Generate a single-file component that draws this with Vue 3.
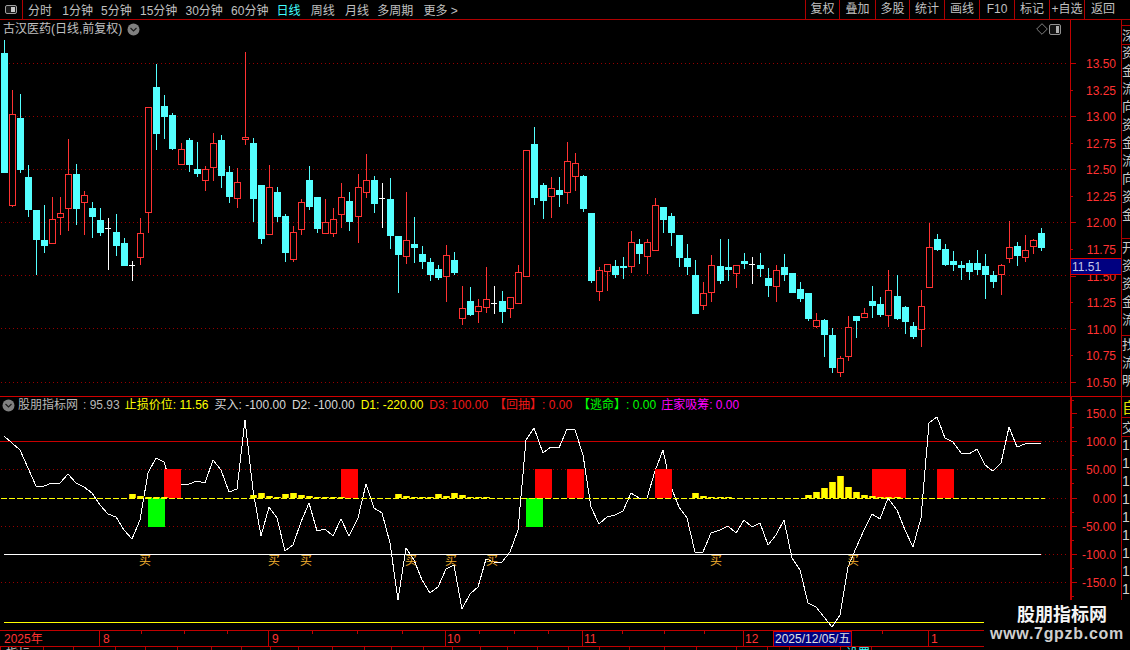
<script setup>
const xOf = (i) => Math.floor(i * 8.0446 + 1.05)

// [kind, high, bodyTop, bodyBottom, low] read from crops; off = y offset ×3 of each crop
const seg1 = `c 0 39 399 399|r 150 222 494 500|c 162 234 390 399|c 375 411 510 531|c 510 510 600 705|c 495 600 618 639|r 471 537 609 612|r 471 519 531 585|r 297 402 504 573|c 372 402 507 555|r 453 465 486 585|c 486 504 531 594|c 504 540 579 588|w 534 564 567 690|c 522 576 618 648|c 594 609 678 678|w 663 675 678 723|r 534 579 651 675|r 201 201 516 579|c 72 141 282 330|c 165 198 231 297|c 219 225 327 330|r 309 327 372 372|c 294 300 375 396|c 306 387 402 411|r 378 387 420 453|r 279 309 381 423|c 285 300 408 444|c 378 396 471 489|r 384 426 474 504|r 36 291 297 315|c 294 309 477 546|c 435 435 597 612|r 375 441 582 582`
const seg2 = `c 201 216 291 306|c 282 288 399 426|r 318 336 417 426|r 237 246 327 345|c 138 180 261 270|c 231 231 327 339|r 237 306 339 339|r 264 297 339 351|r 189 231 282 324|c 216 243 306 333|r 162 201 288 369|r 102 180 216 234|c 168 180 252 279|w 189 234 237 324|c 174 237 348 387|c 348 348 405 519|r 216 360 408 432|c 291 372 384 429|c 378 402 426 447|c 414 426 465 483|c 435 447 474 480|r 375 405 468 546|c 396 420 459 465|r 498 564 594 615|c 501 543 585 588|r 537 558 573 609|r 441 537 561 579|w 498 549 552 582|c 513 543 576 609|r 531 531 564 594|r 435 456 549 549|r 90 90 468 468|c 21 72 234 255|c 189 195 243 297|r 171 204 228 294|c 171 210 225 261|r 66 123 216 252|r 99 129 168 213|c 165 168 267 276|c 279 279 483 489|r 441 450 513 543|r 432 432 453 513|c 420 438 465 474|c 411 438 444 477|r 333 366 438 459|c 357 372 402 432|r 357 366 408 462|r 234 255 390 393|c 261 261 300 339|c 279 288 339 378|c 345 345 414 441|c 372 414 441 465|c 420 465 582 582|r 486 519 555 570|r 405 435 516 546|c 357 438 483 492|c 357 441 450 483|r 435 435 459 504|c 399 423 432 447|w 411 432 435 492|c 399 435 447 471|c 444 474 498 531|r 435 450 498 546`
const seg3 = `c 162 201 225 243|c 219 219 279 279|c 246 267 297 306|c 279 279 357 363|r 339 360 378 384|c 357 360 405 471|c 384 405 504 519|r 468 474 516 531|r 348 381 468 483|c 348 348 363 414|r 324 339 351 351|c 258 303 318 354|c 291 312 345 351|r 210 270 345 381|c 225 288 357 360|c 318 321 366 402|c 366 378 411 417|r 270 318 387 441|r 69 141 261 261|c 102 117 150 153|c 132 147 195 198|c 153 183 195 213|c 183 195 204 240|c 180 189 216 240|c 150 189 210 225|c 162 198 225 297|c 213 225 246 264|r 192 195 222 285|r 63 141 174 189|c 126 138 168 198|r 105 150 171 186|r 117 120 138 162|c 84 99 144 153`

const parse = (txt, off) => txt.split('|').map((r) => {
  const [k, h, t, b, l] = r.split(' ')
  const y = (v) => Math.round((Number(v) + off) / 3)
  return { k, h: y(h), t: y(t), b: y(b), l: y(l) }
})
const colors = { c: '#54ffff', r: '#ff3232', w: '#ffffff' }
const candles = [...parse(seg1, 120), ...parse(seg2, 360), ...parse(seg3, 600)].map((c, i) => {
  const x = xOf(i)
  return { ...c, x, color: colors[c.k], hgt: Math.max(c.b - c.t, 1) }
})

const lineY = [436,443,450,468,486,486,483,483,474,483,487,493,505,514,517,530,539,520,473,458,462,488,485,484,481,483,460,470,492,489,420,490,536,507,518,551,545,522,503,531,529,536,519,536,518,484,508,513,543,600,548,560,580,593,587,569,565,609,594,587,559,562,562,552,530,440,428,453,447,448,429,430,455,507,524,517,515,511,493,498,498,471,450,487,507,518,552,552,533,530,526,533,520,527,523,545,535,520,558,570,603,607,617,627,615,567,548,530,514,519,498,510,530,547,518,423,417,438,442,453,454,449,465,471,463,427,447,444,443,443]
const linePts = lineY.map((y, i) => `${xOf(i) + 3},${y}`).join(' ')

const volTops = {16:494,17:496,18:497,19:497,20:497,31:495,32:493,33:496,34:497,35:494,36:493,37:495,38:496,39:497,40:497,41:497,42:497,49:494,50:496,51:497,52:497,53:497,54:494,55:496,56:493,57:495,58:497,59:497,60:497,86:493,87:496,88:497,89:497,90:497,100:495,101:492,102:488,103:482,104:476,105:487,106:492,107:495,108:496,109:497,110:497,111:497}
const vols = Object.entries(volTops).map(([i, t]) => ({ x: xOf(Number(i)), y: t, h: 498 - t }))

const redBars = [[164,17],[341,17],[535,17],[567,17],[655,17],[872,34],[937,17]]
const greenBars = [148, 526]
const buys = [145,274,306,411,451,492,716,853]

const priceLabels = ['13.50','13.25','13.00','12.75','12.50','12.25','12.00','11.75','11.50','11.25','11.00','10.75','10.50'].map((t, n) => ({ t, y: Math.round(63 + 26.58 * n) }))
const priceDots = [63,116,169,222,275,328,382]
const subLabels = [['150.0',413],['100.0',441],['50.00',469],['0.00',498],['-50.00',526],['-100.0',554],['-150.0',582]].map(([t, y]) => ({ t, y }))
const subMinor = [427,455,483,512,540,568,596,400]

const menu = [
  { t: '分时' }, { t: '1分钟', wide: true }, { t: '5分钟' }, { t: '15分钟' }, { t: '30分钟' }, { t: '60分钟' },
  { t: '日线', active: true }, { t: '周线', wide: true }, { t: '月线', wide: true }, { t: '多周期' }, { t: '更多 >', wide: true }
]
const tools = [['复权',34],['叠加',36],['多股',34],['统计',35],['画线',35],['F10',35],['标记',35],['+自选',35],['返回',37]]
  .map(([t, w]) => ({ t, w }))

const stats = [
  { c: 'gray', t: '股朋指标网' }, { c: 'gray tight', t: ': 95.93' }, { c: 'yellow tight', t: '止损价位: 11.56' },
  { c: 'light', t: '买入: -100.00' }, { c: 'light', t: 'D2: -100.00' }, { c: 'yellow', t: 'D1: -220.00' },
  { c: 'red', t: 'D3: 100.00' }, { c: 'red', t: '【回抽】: 0.00' }, { c: 'green', t: '【逃命】: 0.00' }, { c: 'magenta tight', t: '庄家吸筹: 0.00' }
]

const timeMajor = [[99,'8',103],[268,'9',272],[445,'10',447],[582,'11',584],[743,'12',745],[928,'1',931]]
  .map(([x, t, tx]) => ({ x, t, tx }))
const timeMinor = [141,184,227,312,357,402,479,514,548,622,664,704,882]

const stripA = ['资','金','流','向','资','金','流','向','资','金']
const stripB = ['开','资','资','金','流']
const stripC = ['找','流','明']
const stripD = [1,1,1,1,1,1,1,1,1,1]
const tabs = [[43,'指标'],[30,''],[42,''],[30,''],[32,''],[34,''],[30,''],[29,''],[28,''],[34,''],[32,''],[27,''],[32,''],[29,''],[28,''],[27,''],[30,''],[31,''],[31,''],[30,''],[35,''],[32,''],[40,''],[31,''],[22,''],[51,''],[31,'设置',true],[113,'']]
  .map(([w, t, cyan]) => ({ w, t, cyan }))
</script>

<template>
  <div class="screen">
    <header class="topbar">
      <div class="corner">
        <svg width="12" height="9" viewBox="0 0 12 9"><rect x="0.5" y="0.5" width="11" height="8" rx="1.5" fill="#1a1a1a" stroke="#a0a0a0" /><rect x="6" y="2" width="4" height="5" fill="#c8c8c8" /></svg>
      </div>
      <nav class="menu">
        <span v-for="m in menu" :key="m.t" :class="{ active: m.active, wide: m.wide }">{{ m.t }}</span>
      </nav>
      <div class="tools">
        <span v-for="b in tools" :key="b.t" class="tool" :style="{ width: b.w + 'px' }">{{ b.t }}</span>
      </div>
    </header>

    <div class="body">
      <div class="panes">
        <section class="pane price">
          <svg class="chart" width="1121" height="376" viewBox="0 20 1121 376" shape-rendering="crispEdges">
            <line v-for="y in priceDots" :key="y" x1="1" x2="1066" :y1="y + 0.5" :y2="y + 0.5" class="dots" />
            <g v-for="(c, i) in candles" :key="i">
              <rect :x="c.x + 3" :y="c.h" width="1" :height="c.l - c.h" :fill="c.color" />
              <rect v-if="c.k === 'c'" :x="c.x" :y="c.t" width="7" :height="c.hgt" :fill="c.color" />
              <rect v-else-if="c.k === 'r'" :x="c.x + 0.5" :y="c.t + 0.5" width="6" :height="c.hgt" fill="#000" :stroke="c.color" />
              <rect v-else :x="c.x" :y="c.t" width="6" height="1" :fill="c.color" />
            </g>
            <rect x="1070" y="20" width="1" height="376" fill="#c00000" />
            <rect v-for="(l, n) in priceLabels" :key="l.t" x="1070" :y="l.y" :width="n % 2 ? 3 : 6" height="1" fill="#c00000" />
            <text v-for="l in priceLabels" :key="'t' + l.t" x="1116" :y="l.y + 5" class="axis-text" text-anchor="end">{{ l.t }}</text>
            <rect x="1071" y="258" width="50" height="16" fill="#000080" />
            <rect x="1070" y="258" width="51" height="1" fill="#e00000" />
            <rect x="1070" y="274" width="51" height="1" fill="#e00000" />
            <text x="1072" y="271" class="axis-text last">11.51</text>
          </svg>
          <div class="title">
            <span>古汉医药(日线,前复权)</span>
            <svg width="13" height="13" viewBox="0 0 13 13"><circle cx="6.5" cy="6.5" r="6" fill="#808080" /><path d="M3.5 5l3 3 3-3" fill="none" stroke="#1a1a1a" stroke-width="1.2" /></svg>
          </div>
          <div class="corner-icons">
            <svg width="12" height="12" viewBox="0 0 12 12"><path d="M6 0.7L11.3 6 6 11.3 0.7 6z" fill="none" stroke="#808080" /></svg>
            <svg width="12" height="11" viewBox="0 0 12 11"><rect x="0.5" y="0.5" width="11" height="10" rx="1.5" fill="#111" stroke="#909090" /><rect x="7" y="2" width="3" height="7" fill="#b0b0b0" /></svg>
          </div>
        </section>

        <section class="pane sub">
          <svg class="chart" width="1121" height="234" viewBox="0 396 1121 234" shape-rendering="crispEdges">
            <rect x="0" y="396" width="1121" height="1" fill="#d00000" />
            <line v-for="y in [469, 582]" :key="y" x1="1" x2="1066" :y1="y + 0.5" :y2="y + 0.5" class="dots" />
            <line v-for="y in [441, 498, 554]" :key="'e' + y" x1="1041" x2="1066" :y1="y + 0.5" :y2="y + 0.5" class="dots" />
            <line x1="1" x2="1066" y1="526.5" y2="526.5" class="dots" />
            <rect x="0" y="441" width="1041" height="1" fill="#c80000" />
            <rect x="4" y="554" width="1037" height="1" fill="#ffffff" />
            <rect x="4" y="622" width="980" height="1" fill="#ffff00" />
            <polyline :points="linePts" fill="none" stroke="#ffffff" stroke-width="1" />
            <rect v-for="b in redBars" :key="b[0]" :x="b[0]" y="469" :width="b[1]" height="29" fill="#ff0000" />
            <rect v-for="x in greenBars" :key="x" :x="x" y="498" width="17" height="29" fill="#00ff00" />
            <line x1="1" x2="1045" y1="498.5" y2="498.5" stroke="#ffff00" stroke-dasharray="6 2" />
            <g v-for="v in vols" :key="v.x">
              <rect :x="v.x" :y="v.y" width="7" :height="v.h" fill="#e6b800" />
              <rect :x="v.x + 1" :y="v.y" width="5" :height="v.h" fill="#ffff00" />
            </g>
            <text v-for="x in buys" :key="x" :x="x" y="565" class="buy" text-anchor="middle">买</text>
            <rect x="1070" y="396" width="2" height="234" fill="#c00000" />
            <rect v-for="l in subLabels" :key="l.t" x="1070" :y="l.y" width="7" height="1" fill="#c00000" />
            <rect v-for="y in subMinor" :key="y" x="1070" :y="y" width="4" height="1" fill="#c00000" />
            <text v-for="l in subLabels" :key="'s' + l.t" x="1116" :y="l.y + 5" class="axis-text" text-anchor="end">{{ l.t }}</text>
          </svg>
          <div class="stats">
            <svg width="13" height="13" viewBox="0 0 13 13"><circle cx="6.5" cy="6.5" r="6" fill="#808080" /><path d="M3.5 5l3 3 3-3" fill="none" stroke="#1a1a1a" stroke-width="1.2" /></svg>
            <span v-for="s in stats" :key="s.t" :class="s.c">{{ s.t }}</span>
          </div>
        </section>

        <section class="timeaxis">
          <svg width="1121" height="17" viewBox="0 630 1121 17" shape-rendering="crispEdges">
            <rect x="0" y="630" width="1121" height="1" fill="#c00000" />
            <rect x="0" y="646" width="1121" height="1" fill="#c00000" />
            <rect v-for="x in timeMinor" :key="x" :x="x" y="630" width="1" height="4" fill="#c00000" />
            <g v-for="m in timeMajor" :key="m.x">
              <rect :x="m.x" y="630" width="1" height="17" fill="#c00000" />
              <text :x="m.tx" y="643" class="axis-text">{{ m.t }}</text>
            </g>
            <text x="4" y="643" class="axis-text">2025年</text>
            <rect x="773.5" y="631.5" width="78" height="15" fill="#000080" stroke="#d00000" />
            <text x="775" y="643" class="axis-text date">2025/12/05/五</text>
          </svg>
        </section>

        <div class="tabs">
          <span v-for="(t, i) in tabs" :key="i" class="tab" :class="{ cyan: t.cyan }" :style="{ width: t.w + 'px' }">{{ t.t }}</span>
        </div>
      </div>

      <aside class="strip">
        <div class="cell small"></div>
        <div class="cell boxed">深</div>
        <div class="group g1"><div v-for="(c, i) in stripA" :key="i" class="cell">{{ c }}</div></div>
        <div class="group g2"><div v-for="(c, i) in stripB" :key="i" class="cell">{{ c }}</div></div>
        <div class="group g3"><div v-for="(c, i) in stripC" :key="i" class="cell">{{ c }}</div></div>
        <div class="cell boxed zi">自</div>
        <div class="cell boxed jiao">交</div>
        <div class="group"><div v-for="(c, i) in stripD" :key="i" class="cell digit">{{ c }}</div></div>
      </aside>
    </div>

    <div class="watermark">
      <div class="wm-title">股朋指标网</div>
      <div class="wm-url">www.7gpzb.com</div>
    </div>
  </div>
</template>

<style>
html, body { margin: 0; background: #000; }
</style>

<style scoped>
.screen {
  position: relative;
  width: 1130px;
  height: 650px;
  overflow: hidden;
  background: #000;
  color: #c0c0c0;
  font: 12px "Liberation Sans", "Noto Sans CJK SC", sans-serif;
}
.topbar {
  display: flex;
  align-items: stretch;
  height: 19px;
  border-bottom: 1px solid #b00000;
}
.corner {
  width: 23px;
  border-right: 1px solid #b00000;
  display: flex;
  align-items: center;
  padding-left: 5px;
  box-sizing: border-box;
  padding-bottom: 1px;
}
.menu {
  display: flex;
  align-items: center;
  gap: 8.2px;
  padding-left: 5px;
  flex: 1;
  font-size: 12px;
}
.menu .wide { margin-left: 2px; }
.menu .active { color: #40ffff; }
.tools { display: flex; margin-right: 9px; }
.tool {
  border-left: 1px solid #b00000;
  box-sizing: border-box;
  text-align: center;
  line-height: 19px;
  white-space: nowrap;
}
.body { display: flex; height: 630px; }
.panes { width: 1121px; display: flex; flex-direction: column; }
.pane { position: relative; }
.price { height: 376px; }
.sub { height: 234px; }
.timeaxis { height: 17px; }
.chart, .timeaxis svg { display: block; }
.dots { stroke: #960000; stroke-dasharray: 1 3; }
.axis-text {
  fill: #ff3232;
  font: 12px "Liberation Sans", "Noto Sans CJK SC", sans-serif;
}
.axis-text.last { fill: #c8c8e8; }
.axis-text.date { fill: #e0e0e0; }
.buy {
  fill: #f0b030;
  font: 12px "Noto Sans CJK SC", sans-serif;
}
.title {
  position: absolute;
  left: 3px;
  top: 2px;
  display: flex;
  align-items: center;
  gap: 5px;
  line-height: 14px;
}
.corner-icons {
  position: absolute;
  left: 1036px;
  top: 3px;
  display: flex;
  align-items: center;
  gap: 1px;
}
.stats {
  position: absolute;
  left: 2px;
  top: 2px;
  display: flex;
  align-items: center;
  gap: 6px;
  line-height: 14px;
  white-space: nowrap;
}
.stats svg { margin-right: -3px; }
.stats .tight { margin-left: -1px; }
.gray { color: #b8b8b8; }
.light { color: #d8d8d8; }
.yellow { color: #ffff00; }
.red { color: #f01818; }
.green { color: #00ff00; }
.magenta { color: #ff00ff; }
.tabs { display: flex; height: 3px; overflow: hidden; }
.tab {
  flex: none;
  box-sizing: border-box;
  border-left: 1px solid #b00000;
  line-height: 14px;
  padding-left: 5px;
  font-size: 12px;
  white-space: nowrap;
}
.tab.cyan { color: #40ffff; }
.strip {
  width: 9px;
  overflow: hidden;
  border-left: 1px solid #b00000;
  box-sizing: border-box;
  height: 630px;
  color: #c8c8c8;
  font-size: 13px;
}
.cell { height: 18px; line-height: 18px; white-space: nowrap; width: 9px; overflow: hidden; }
.small { height: 5px; }
.boxed {
  height: 20px;
  line-height: 20px;
  border-top: 1px solid #b00000;
  border-bottom: 1px solid #b00000;
  box-sizing: border-box;
  margin-bottom: -1px;
}
.group { overflow: hidden; }
.g1 { height: 194px; }
.g2 { height: 97px; border-top: 1px solid #b00000; box-sizing: border-box; }
.g3 { height: 61px; border-top: 1px solid #b00000; box-sizing: border-box; }
.zi { color: #e0e000; height: 22px; line-height: 22px; font-size: 15px; }
.jiao { height: 20px; }
.digit { font-size: 14px; color: #d0d0d0; }
.watermark {
  position: absolute;
  left: 984px;
  top: 600px;
  width: 146px;
  height: 50px;
  background: #000;
  text-align: center;
  font-family: "Liberation Sans", "Noto Sans CJK SC", sans-serif;
  font-weight: 700;
}
.wm-title {
  color: #f4f4f4;
  font-size: 18px;
  line-height: 22px;
  margin-top: 4px;
  padding-left: 10px;
}
.wm-url {
  color: #cfcfcf;
  font-size: 16px;
  line-height: 19px;
  margin-top: -2px;
  letter-spacing: 0.7px;
  white-space: nowrap;
}
</style>
